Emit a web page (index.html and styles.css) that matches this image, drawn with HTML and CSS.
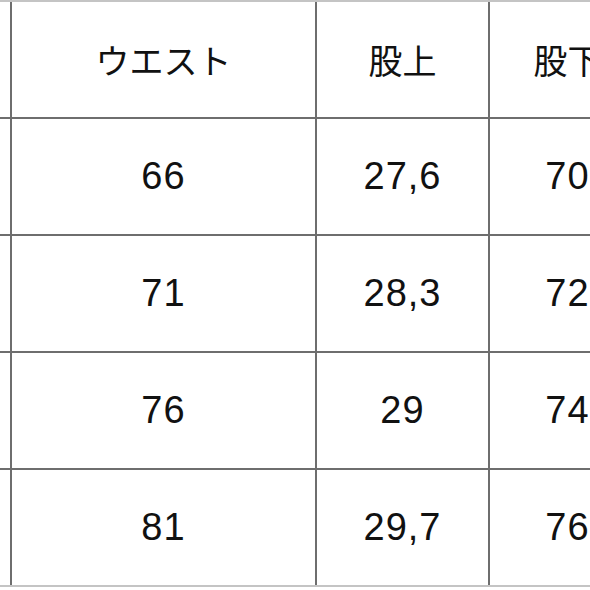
FILE: index.html
```html
<!DOCTYPE html>
<html lang="ja">
<head>
<meta charset="utf-8">
<link rel="stylesheet" href="styles.css">
</head>
<body>
<div class="frame">
  <div class="grid">
    <div class="cell"></div>
    <div class="cell head">ウエスト</div>
    <div class="cell head">股上</div>
    <div class="cell head">股下</div>

    <div class="cell"></div>
    <div class="cell">66</div>
    <div class="cell">27,6</div>
    <div class="cell">70</div>

    <div class="cell"></div>
    <div class="cell">71</div>
    <div class="cell">28,3</div>
    <div class="cell">72</div>

    <div class="cell"></div>
    <div class="cell">76</div>
    <div class="cell">29</div>
    <div class="cell">74</div>

    <div class="cell"></div>
    <div class="cell">81</div>
    <div class="cell">29,7</div>
    <div class="cell">76</div>
  </div>
</div>
</body>
</html>
```

FILE: styles.css
```css
html, body {
  margin: 0;
  padding: 0;
  background: #ffffff;
  width: 590px;
  height: 590px;
  overflow: hidden;
}

.frame {
  margin-left: -48px;
  width: 720px;
  border-top: 2px solid #c4c4c4;
  border-bottom: 2px solid #c4c4c4;
}

.grid {
  display: grid;
  grid-template-columns: 58px 303px 171px 155px;
  grid-auto-rows: 115px;
  gap: 2px;
  background: #6e6e6e;
  width: 693px;
}

.cell {
  background: #ffffff;
  display: flex;
  align-items: center;
  justify-content: center;
  font-family: "Liberation Sans", "Noto Sans CJK JP", sans-serif;
  font-size: 38px;
  letter-spacing: 1px;
  color: #111111;
  white-space: nowrap;
  overflow: hidden;
}

.head {
  font-family: "Noto Sans CJK JP", "Liberation Sans", sans-serif;
  font-size: 34px;
  letter-spacing: 0;
}
```
